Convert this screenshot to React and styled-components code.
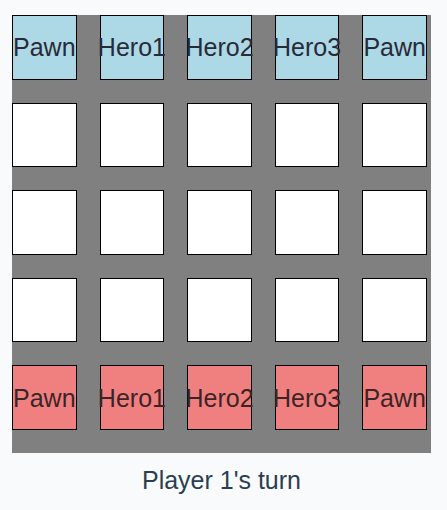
import React from "react";
import styled, { createGlobalStyle } from "styled-components";

const GlobalStyle = createGlobalStyle`
  * { box-sizing: border-box; }
  body {
    margin: 0;
    min-height: 100vh;
    background: #f8fafc;
    color: #2c3e50;
    font-family: "Liberation Sans", Arial, sans-serif;
    font-size: 25px;
    line-height: 36px;
  }
`;

const Game = styled.main`
  display: flex;
  flex-direction: column;
  gap: 9px;
  padding: 15px 16px 12px 12px;
`;

const Board = styled.div`
  display: grid;
  grid-template-columns: repeat(5, minmax(0, 1fr));
  gap: 23px;
  padding: 0 4px 23px 0;
  background: #808080;
`;

const fills = { top: "#add8e6", bottom: "#f08080", empty: "#ffffff" };

const Cell = styled.button`
  display: flex;
  align-items: center;
  justify-content: center;
  aspect-ratio: 1;
  min-width: 0;
  padding: 0;
  border: 1px solid #000;
  border-radius: 0;
  background: ${({ $side }) => fills[$side]};
  color: ${({ $side }) => ($side === "bottom" ? "#3c2426" : "#282a36")};
  font: inherit;
  white-space: nowrap;
  cursor: pointer;
`;

const Status = styled.p`
  margin: 0;
  text-align: center;
`;

const pieces = ["Pawn", "Hero1", "Hero2", "Hero3", "Pawn"];
const blank = ["", "", "", "", ""];
const rows = [
  { side: "top", cells: pieces },
  { side: "empty", cells: blank },
  { side: "empty", cells: blank },
  { side: "empty", cells: blank },
  { side: "bottom", cells: pieces },
];

export default function App() {
  return (
    <>
      <GlobalStyle />
      <Game>
        <Board>
          {rows.map((row, y) =>
            row.cells.map((name, x) => (
              <Cell
                key={`${y}-${x}`}
                type="button"
                $side={row.side}
                aria-label={name ? undefined : `Empty square, row ${y + 1}, column ${x + 1}`}
              >
                {name}
              </Cell>
            ))
          )}
        </Board>
        <Status>Player 1's turn</Status>
      </Game>
    </>
  );
}
